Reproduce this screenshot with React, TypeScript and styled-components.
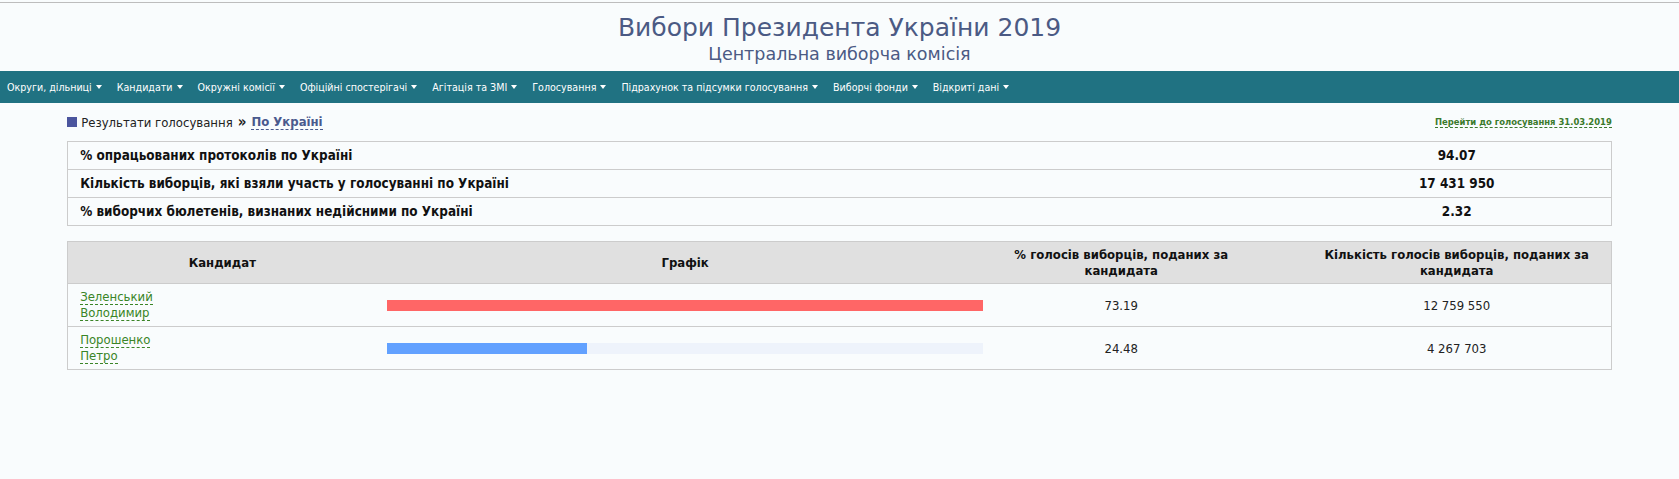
import styled, { createGlobalStyle } from 'styled-components'

const GlobalStyle = createGlobalStyle`
	body {
		margin: 0;
		background: #f9fcfd;
		font-family: 'DejaVu Sans Condensed', 'DejaVu Sans', Tahoma, sans-serif;
		color: #111;
	}
`

const menu = [
	'Округи, дільниці',
	'Кандидати',
	'Окружні комісії',
	'Офіційні спостерігачі',
	'Агітація та ЗМІ',
	'Голосування',
	'Підрахунок та підсумки голосування',
	'Виборчі фонди',
	'Відкриті дані',
]

const summary = [
	{ label: '% опрацьованих протоколів по Україні', value: '94.07' },
	{ label: 'Кількість виборців, які взяли участь у голосуванні по Україні', value: '17 431 950' },
	{ label: '% виборчих бюлетенів, визнаних недійсними по Україні', value: '2.32' },
]

const candidates = [
	{ last: 'Зеленський', first: 'Володимир', percent: 73.19, votes: '12 759 550', color: '#ff6666' },
	{ last: 'Порошенко', first: 'Петро', percent: 24.48, votes: '4 267 703', color: '#62a1ff' },
]

const MAX_PERCENT = Math.max(...candidates.map(c => c.percent))

export default function App() {
	return (
		<>
			<GlobalStyle />
			<Masthead>
				<Title>Вибори Президента України 2019</Title>
				<Subtitle>Центральна виборча комісія</Subtitle>
			</Masthead>
			<Menu>
				{menu.map(item => (
					<MenuItem key={item}>{item}</MenuItem>
				))}
			</Menu>
			<Content>
				<Crumbs>
					<Trail>
						<Square />
						Результати голосування
						<Arrow>»</Arrow>
						<Current>По Україні</Current>
					</Trail>
					<JumpLink>Перейти до голосування 31.03.2019</JumpLink>
				</Crumbs>
				<SummaryTable>
					<tbody>
						{summary.map(row => (
							<tr key={row.label}>
								<SummaryLabel>{row.label}</SummaryLabel>
								<SummaryValue>{row.value}</SummaryValue>
							</tr>
						))}
					</tbody>
				</SummaryTable>
				<ResultsTable>
					<colgroup>
						<col style={{ width: '20%' }} />
						<col style={{ width: '40%' }} />
						<col style={{ width: '20%' }} />
						<col style={{ width: '20%' }} />
					</colgroup>
					<thead>
						<tr>
							<HeadCell>Кандидат</HeadCell>
							<HeadCell>Графік</HeadCell>
							<HeadCell $shift>
								% голосів виборців, поданих за
								<br />
								кандидата
							</HeadCell>
							<HeadCell>
								Кількість голосів виборців, поданих за
								<br />
								кандидата
							</HeadCell>
						</tr>
					</thead>
					<tbody>
						{candidates.map(c => (
							<tr key={c.last}>
								<NameCell>
									<NameLink>{c.last}</NameLink>
									<br />
									<NameLink>{c.first}</NameLink>
								</NameCell>
								<BarCell>
									<Track>
										<Fill $color={c.color} style={{ width: `${(c.percent / MAX_PERCENT) * 100}%` }} />
									</Track>
								</BarCell>
								<NumberCell $shift>{c.percent.toFixed(2)}</NumberCell>
								<NumberCell>{c.votes}</NumberCell>
							</tr>
						))}
					</tbody>
				</ResultsTable>
			</Content>
		</>
	)
}

const Masthead = styled.header`
	margin-top: 2px;
	border-top: 1px solid #bdbdbd;
	padding: 10px 0 5px;
	text-align: center;
	color: #4b5a84;
`

const Title = styled.h1`
	margin: 0;
	font-family: 'DejaVu Sans', Verdana, sans-serif;
	font-size: 25px;
	font-weight: normal;
	line-height: 30px;
`

const Subtitle = styled.div`
	font-family: 'DejaVu Sans', Verdana, sans-serif;
	font-size: 17.5px;
	line-height: 23px;
`

const Menu = styled.nav`
	display: flex;
	align-items: center;
	height: 32px;
	background: #207282;
`

const MenuItem = styled.div`
	display: flex;
	align-items: center;
	padding: 0 7px;
	margin-right: 1px;
	color: #fff;
	font-size: 10.6px;
	white-space: nowrap;

	&::after {
		content: '';
		margin-left: 4px;
		border-left: 3.5px solid transparent;
		border-right: 3.5px solid transparent;
		border-top: 4px solid #fff;
	}
`

const Content = styled.main`
	width: 92%;
	margin: 0 auto;
`

const Crumbs = styled.div`
	display: flex;
	align-items: center;
	justify-content: space-between;
	height: 38px;
`

const Trail = styled.div`
	display: flex;
	align-items: center;
	font-size: 13px;
	color: #222;
`

const Square = styled.span`
	width: 10px;
	height: 10px;
	margin-right: 4px;
	background: #4b559e;
`

const Arrow = styled.b`
	margin: 0 5px;
	font-size: 15px;
	font-weight: 900;
`

const Current = styled.span`
	font-weight: bold;
	color: #4a5a8e;
	border-bottom: 1px dashed #4a5a8e;
`

const JumpLink = styled.span`
	font-size: 9.4px;
	font-weight: bold;
	color: #3b7a2c;
	border-bottom: 1px dashed #3b7a2c;
`

const SummaryTable = styled.table`
	width: 100%;
	border-collapse: collapse;
	border: 1px solid #ccc;
	font-size: 13.4px;
	font-weight: bold;

	td {
		height: 27px;
		padding: 0;
		border-bottom: 1px solid #ccc;
	}
`

const SummaryLabel = styled.td`
	padding-left: 12px !important;
`

const SummaryValue = styled.td`
	width: 20%;
	text-align: center;
`

const ResultsTable = styled.table`
	width: 100%;
	margin-top: 15px;
	border-collapse: collapse;
	border: 1px solid #ccc;
	table-layout: fixed;
	font-size: 13px;

	td {
		height: 42px;
		border-bottom: 1px solid #ccc;
	}
`

const HeadCell = styled.th<{ $shift?: boolean }>`
	height: 41px;
	padding: 0 ${({ $shift }) => ($shift ? '60px' : '6px')} 0 6px;
	background: #e0e0e0;
	font-weight: bold;
	line-height: 16px;
	text-align: center;
	border-bottom: 1px solid #ccc;
`

const NameCell = styled.td`
	padding: 0 12px;
	line-height: 16px;
`

const NameLink = styled.span`
	color: #3a8527;
	border-bottom: 1px dashed #3a8527;
`

const BarCell = styled.td`
	padding: 0 11px;
`

const Track = styled.div`
	height: 11px;
	background: #eef3fb;
`

const Fill = styled.div<{ $color: string }>`
	height: 100%;
	background: ${({ $color }) => $color};
`

const NumberCell = styled.td<{ $shift?: boolean }>`
	padding: 0 ${({ $shift }) => ($shift ? '60px' : '6px')} 0 6px;
	text-align: center;
	color: #222;
`
